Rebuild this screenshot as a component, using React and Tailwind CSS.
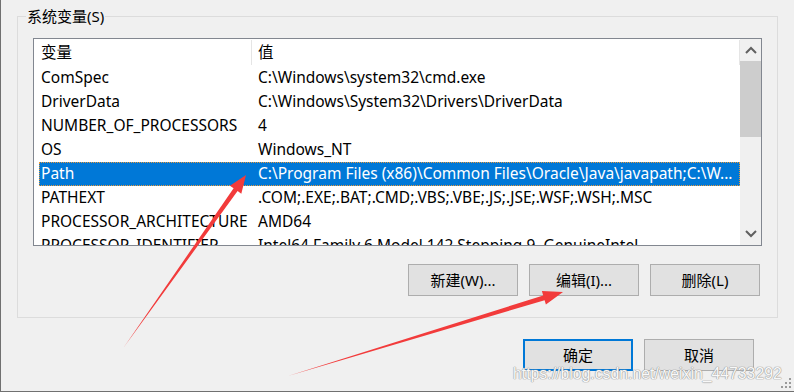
import React from 'react'

const rows = [
    ['ComSpec', 'C:\\Windows\\system32\\cmd.exe'],
    ['DriverData', 'C:\\Windows\\System32\\Drivers\\DriverData'],
    ['NUMBER_OF_PROCESSORS', '4'],
    ['OS', 'Windows_NT'],
    ['Path', 'C:\\Program Files (x86)\\Common Files\\Oracle\\Java\\javapath;C:\\W...'],
    ['PATHEXT', '.COM;.EXE;.BAT;.CMD;.VBS;.VBE;.JS;.JSE;.WSF;.WSH;.MSC'],
    ['PROCESSOR_ARCHITECTURE', 'AMD64'],
    ['PROCESSOR_IDENTIFIER', 'Intel64 Family 6 Model 142 Stepping 9, GenuineIntel'],
]

const Chevron = ({ up }) => (
    <svg width="12" height="8" viewBox="0 0 12 8">
        <polyline
            points={up ? '1,7 6,2 11,7' : '1,1 6,6 11,1'}
            fill="none"
            stroke="#606060"
            strokeWidth="2"
        />
    </svg>
)

const Button = ({ children, primary }) => (
    <div
        className={`w-[110px] h-[32px] flex items-center justify-center bg-[#e1e1e1] text-[15px] text-black ${
            primary ? 'border-2 border-[#0078d7]' : 'border border-[#adadad]'
        }`}
    >
        {children}
    </div>
)

export default function App() {
    return (
        <div
            className="relative w-[794px] h-[392px] overflow-hidden bg-[#f0f0f0] border-l border-b border-[#707070] pl-[16px] pr-[16px] pt-[16px]"
            style={{ fontFamily: '"Noto Sans", "Noto Sans CJK SC", sans-serif' }}
        >
            {/* group box */}
            <div className="relative h-[302px] border border-[#dcdcdc] px-[15px] pt-[21px]">
                <span className="absolute -top-[11px] left-[8px] px-[1px] bg-[#f0f0f0] text-[15px] leading-[20px] text-black">
                    系统变量(S)
                </span>

                {/* list view */}
                <div className="h-[208px] border border-[#828790] bg-white flex">
                    <div className="flex-1 overflow-hidden">
                        <div className="h-[27px] flex items-stretch text-[15.5px] text-black">
                            <div className="w-[217px] pl-[7px] flex items-center">变量</div>
                            <div className="w-px bg-[#e5e5e5] my-[1px]" />
                            <div className="flex-1 pl-[6px] flex items-center">值</div>
                            <div className="w-px bg-[#e5e5e5] my-[1px]" />
                        </div>
                        {rows.map(([name, value]) => {
                            const selected = name === 'Path'
                            return (
                                <div
                                    key={name}
                                    className={`ml-[5px] h-[24px] flex items-center text-[15.5px] whitespace-nowrap ${
                                        selected
                                            ? 'bg-[#0078d7] text-white outline-1 outline-dotted outline-[#e89a3c] -outline-offset-1'
                                            : 'text-black'
                                    }`}
                                >
                                    <div className="w-[212px] shrink-0 overflow-hidden pl-[2px]">{name}</div>
                                    <div className="flex-1 overflow-hidden pl-[7px]">{value}</div>
                                </div>
                            )
                        })}
                    </div>

                    {/* scrollbar */}
                    <div className="w-[21px] bg-[#f0f0f0] flex flex-col">
                        <div className="h-[22px] flex items-center justify-center">
                            <Chevron up />
                        </div>
                        <div className="flex-1">
                            <div className="h-[76px] bg-[#cdcdcd]" />
                        </div>
                        <div className="h-[22px] flex items-center justify-center">
                            <Chevron />
                        </div>
                    </div>
                </div>

                <div className="mt-[18px] flex justify-end gap-[11px] pr-[2px]">
                    <Button>新建(W)...</Button>
                    <Button>编辑(I)...</Button>
                    <Button>删除(L)</Button>
                </div>
            </div>

            <div className="mt-[21px] flex justify-end gap-[11px] pr-[24px]">
                <Button primary>确定</Button>
                <Button>取消</Button>
            </div>

            {/* annotation arrows */}
            <svg className="absolute left-0 top-0 pointer-events-none" width="794" height="392">
                <polygon
                    fill="#f23b3b"
                    points="123,347 232.6,188.3 228.9,185.7 245,175 240.3,193.7 236.6,191.1"
                />
                <polygon
                    fill="#f23b3b"
                    points="287,376 542.2,295.4 540.9,291.1 562,292 544.9,304.5 543.6,300.2"
                />
            </svg>

            {/* watermark */}
            <span
                className="absolute left-[512px] top-[365px] text-[15.8px] leading-[18px] text-[#f8f8f8] [text-shadow:0_0_1px_#9a9a9a,0_0_1px_#9a9a9a,0_0_1px_#9a9a9a] whitespace-nowrap"
                style={{ fontFamily: '"Liberation Sans", Arial, sans-serif' }}
            >
                https://blog.csdn.net/weixin_44733292
            </span>

            {/* resize grip */}
            <svg className="absolute right-[2px] bottom-[2px]" width="12" height="12" viewBox="0 0 12 12">
                <rect x="9" y="1" width="2" height="2" fill="#9a9a9a" />
                <rect x="5" y="5" width="2" height="2" fill="#9a9a9a" />
                <rect x="9" y="5" width="2" height="2" fill="#9a9a9a" />
                <rect x="1" y="9" width="2" height="2" fill="#9a9a9a" />
                <rect x="5" y="9" width="2" height="2" fill="#9a9a9a" />
                <rect x="9" y="9" width="2" height="2" fill="#9a9a9a" />
            </svg>
        </div>
    )
}
